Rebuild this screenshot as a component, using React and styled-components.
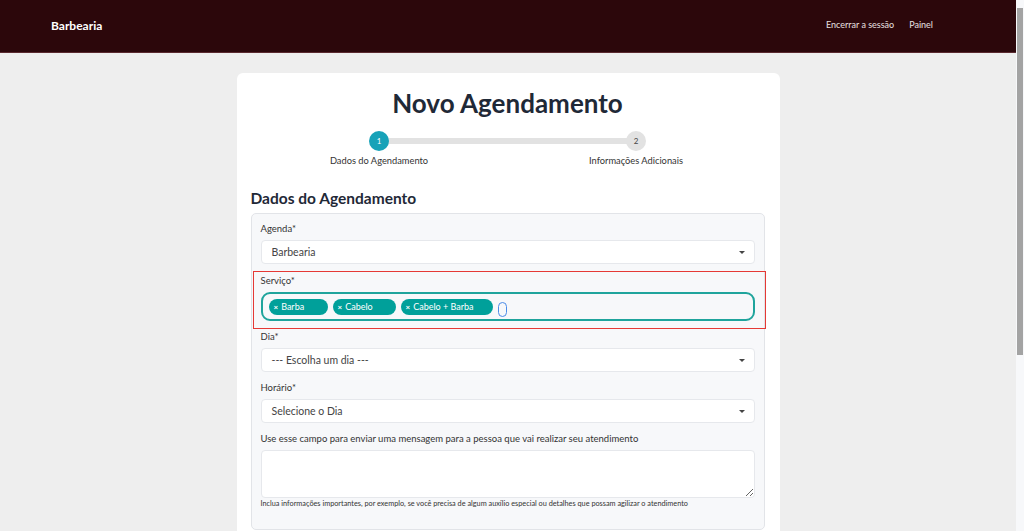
import React from 'react';
import styled, { createGlobalStyle } from 'styled-components';

const GlobalStyle = createGlobalStyle`
  * { box-sizing: border-box; }
  html {
    background: #f7f8fa;
  }
  body {
    margin: 0 8px 0 0;
    background: #eeeeee;
    font-family: Lato, "Open Sans", sans-serif;
    color: #333;
  }
`;

const ScrollThumb = styled.div`
  position: fixed;
  top: 8px;
  right: 1px;
  width: 6px;
  height: 347px;
  background: #a3a3a3;
`;

const Navbar = styled.nav`
  height: 53px;
  background: #2c070b;
  border-bottom: 1px solid #5a2a30;
  display: flex;
  align-items: center;
  justify-content: space-between;
  padding: 0 83px 0 51px;
`;

const Brand = styled.a`
  color: #fff;
  font-size: 12px;
  font-weight: 700;
  margin-top: -1px;
`;

const NavLinks = styled.div`
  display: flex;
  gap: 15px;
  margin-top: -4px;
  a {
    color: #e8e0e0;
    font-size: 9px;
  }
`;

const Main = styled.main`
  padding: 20px 0 40px;
`;

const Card = styled.section`
  width: 543px;
  margin: 0 auto;
  background: #fff;
  border-radius: 6px;
  padding: 15px 15px 30px 14px;
`;

const Title = styled.h1`
  margin: 0;
  text-align: center;
  font-size: 26px;
  line-height: 31px;
  font-weight: 700;
  color: #1f2937;
`;

const Stepper = styled.div`
  display: flex;
  margin-top: 12px;
`;

const Step = styled.div`
  flex: 1;
  position: relative;
  display: flex;
  flex-direction: column;
  align-items: center;
  ${(p) =>
    p.$first &&
    `
    &::after {
      content: '';
      position: absolute;
      top: 7px;
      left: 50%;
      width: 100%;
      height: 6px;
      background: #e2e2e2;
      z-index: 0;
    }
  `}
`;

const Circle = styled.span`
  position: relative;
  z-index: 1;
  width: 20px;
  height: 20px;
  border-radius: 50%;
  background: ${(p) => (p.$active ? '#17a2b8' : '#e2e2e2')};
  color: ${(p) => (p.$active ? '#fff' : '#444')};
  font-size: 8px;
  display: flex;
  align-items: center;
  justify-content: center;
`;

const StepLabel = styled.span`
  margin-top: 4px;
  font-size: 9.3px;
  color: #333;
`;

const SectionTitle = styled.h2`
  margin: 22px 0 5px;
  font-size: 15.5px;
  line-height: 20px;
  font-weight: 700;
  color: #1f2937;
`;

const Fieldset = styled.div`
  background: #f7f8fa;
  border: 1px solid #e2e4e8;
  border-radius: 5px;
  padding: 9px 9px 20px;
`;

const Group = styled.div`
  margin-bottom: ${(p) => p.$mb ?? 10}px;
`;

const Highlight = styled.div`
  border: 1px solid #e53935;
  margin: 0 -11px 2px -8px;
  padding: 3px 10px 7px 7px;
`;

const Label = styled.label`
  display: block;
  font-size: 9.5px;
  line-height: 12px;
  color: #333;
  margin-bottom: 5px;
`;

const Select = styled.div`
  height: 24px;
  background: #fff;
  border: 1px solid #e6e8ec;
  border-radius: 4px;
  display: flex;
  align-items: center;
  justify-content: space-between;
  padding: 0 9px 0 10px;
  font-size: 10.5px;
  color: #444;
  &::after {
    content: '';
    border-left: 3px solid transparent;
    border-right: 3px solid transparent;
    border-top: 3px solid #444;
  }
`;

const MultiBox = styled.div`
  height: 29px;
  border: 2px solid #1fa49c;
  border-radius: 9px;
  display: flex;
  align-items: center;
  gap: 5px;
  padding: 0 6px;
`;

const Tag = styled.span`
  height: 16px;
  width: ${(p) => p.$w}px;
  background: #00a09a;
  color: #fff;
  border-radius: 8px;
  font-size: 9px;
  display: flex;
  align-items: center;
  padding: 0 5px;
  gap: 3px;
  b {
    font-size: 8px;
    font-weight: 700;
  }
`;

const Cursor = styled.span`
  width: 9px;
  height: 15px;
  border: 1.5px solid #4a8be8;
  border-radius: 5px;
  margin-top: 6px;
`;

const TextArea = styled.textarea`
  display: block;
  width: 100%;
  height: 48px;
  background: #fff;
  border: 1px solid #e6e8ec;
  border-radius: 4px;
  resize: vertical;
  margin: 0;
`;

const Help = styled.small`
  display: block;
  font-size: 7.3px;
  line-height: 10px;
  margin-top: 1px;
  color: #333;
`;

export default function App() {
  return (
    <>
      <GlobalStyle />
      <ScrollThumb />
      <Navbar>
        <Brand>Barbearia</Brand>
        <NavLinks>
          <a>Encerrar a sessão</a>
          <a>Painel</a>
        </NavLinks>
      </Navbar>
      <Main>
        <Card>
          <Title>Novo Agendamento</Title>
          <Stepper>
            <Step $first>
              <Circle $active>1</Circle>
              <StepLabel>Dados do Agendamento</StepLabel>
            </Step>
            <Step>
              <Circle>2</Circle>
              <StepLabel>Informações Adicionais</StepLabel>
            </Step>
          </Stepper>
          <SectionTitle>Dados do Agendamento</SectionTitle>
          <Fieldset>
            <Group $mb={7}>
              <Label>Agenda*</Label>
              <Select>Barbearia</Select>
            </Group>
            <Highlight>
              <Label>Serviço*</Label>
              <MultiBox>
                <Tag $w={59}><b>×</b>Barba</Tag>
                <Tag $w={63}><b>×</b>Cabelo</Tag>
                <Tag $w={92}><b>×</b>Cabelo + Barba</Tag>
                <Cursor />
              </MultiBox>
            </Highlight>
            <Group>
              <Label>Dia*</Label>
              <Select>--- Escolha um dia ---</Select>
            </Group>
            <Group>
              <Label>Horário*</Label>
              <Select>Selecione o Dia</Select>
            </Group>
            <Group $mb={0}>
              <Label>Use esse campo para enviar uma mensagem para a pessoa que vai realizar seu atendimento</Label>
              <TextArea />
              <Help>
                Inclua informações importantes, por exemplo, se você precisa de algum auxílio especial ou detalhes que possam agilizar o atendimento
              </Help>
            </Group>
          </Fieldset>
        </Card>
      </Main>
    </>
  );
}
